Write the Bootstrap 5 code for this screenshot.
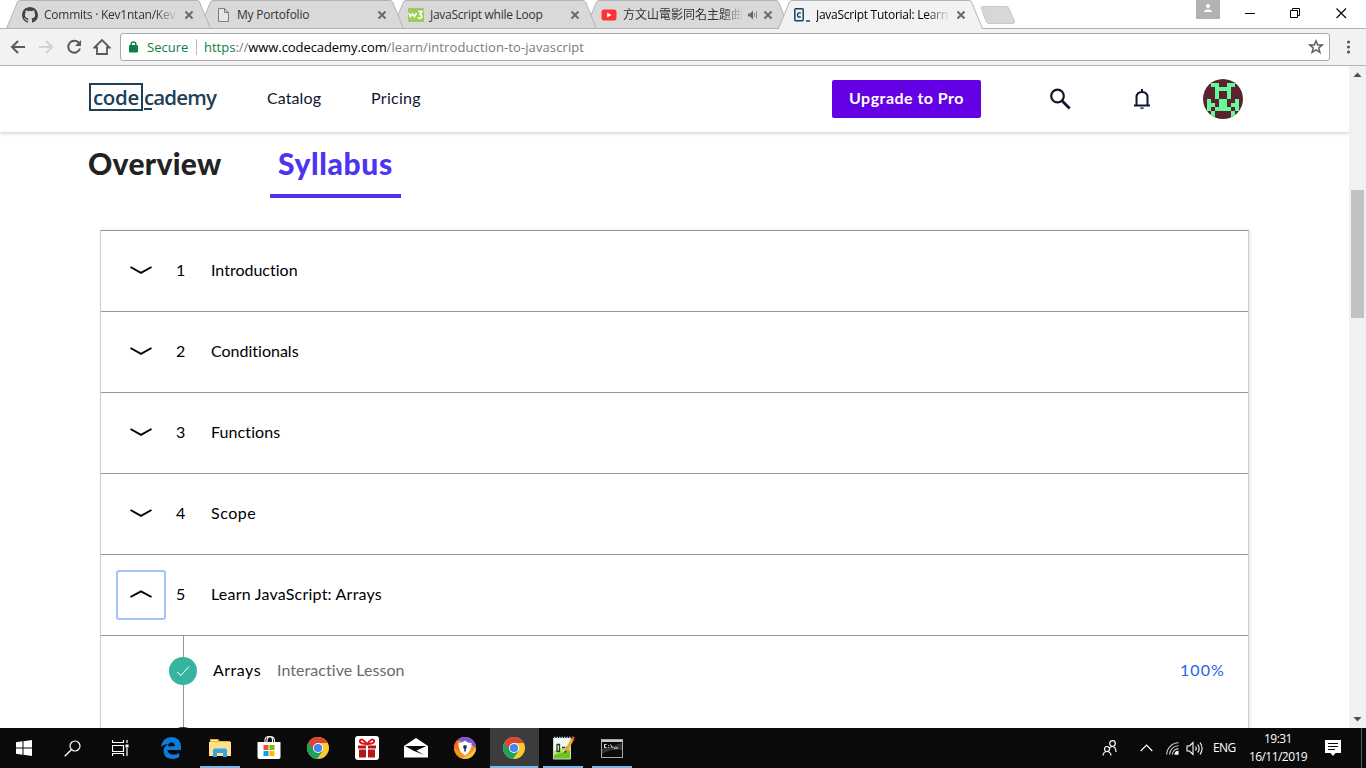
<!DOCTYPE html>
<html lang="en">
<head>
<meta charset="utf-8">
<meta name="viewport" content="width=device-width, initial-scale=1">
<title>JavaScript Tutorial: Learn JavaScript | Codecademy</title>
<link href="https://cdn.jsdelivr.net/npm/bootstrap@5.3.0/dist/css/bootstrap.min.css" rel="stylesheet">
<style>
body{width:1366px;height:768px;overflow:hidden;background:#fff;font-family:"Open Sans","Noto Sans CJK TC",sans-serif;color:#000}
svg{display:block;flex:none}
.t{white-space:nowrap;flex:none}
/* browser chrome */
.tabstrip{height:29px;background:#fff;padding-left:6px;border-bottom:1px solid #b3b3b3}
.btab{width:205px;height:29px;margin-right:-12px;padding-left:16px;font-size:12px;line-height:29px;letter-spacing:-.24px;color:#333;flex:none;isolation:isolate}
.btab>svg.shape{position:absolute;left:0;top:0;z-index:-1}
.btab .ttl{width:134px;margin-left:6px}
.btab .ttl+svg{margin-left:6px}
.fade-end{-webkit-mask-image:linear-gradient(90deg,#000 82%,transparent);mask-image:linear-gradient(90deg,#000 82%,transparent)}
.toolbar{height:37px;background:#f2f2f2;border-bottom:1px solid #b6b6b6;padding-left:10px}
.omni{width:1210px;height:28px;background:#fff;border:1px solid #a9a9a9;border-radius:3px;font-size:13px;line-height:26px}
.grn{color:#0b8043}.gry{color:#7b7b7b}
/* page */
.viewport{height:662px}
.page{width:1349px;overflow:hidden}
.sitebar{height:66px;box-shadow:0 1px 4px rgba(0,0,0,.22);padding-left:89px;font-family:Lato,sans-serif;font-size:16px;color:#10162f;z-index:2}
.sitebar .nl{padding-bottom:2px}
.logo{height:28px;color:#204056;font:600 20.5px/24px "Open Sans",sans-serif;letter-spacing:-.85px}
.logo .boxed{width:54px;height:28px;border:2px solid #204056;padding-left:2px;letter-spacing:-.35px}
.btn-pro{width:149px;height:38px;border-radius:2px;background:#6400e4;color:#fff;font:700 16px/34px Lato,sans-serif;letter-spacing:.48px;padding:0 0 3px;border:0}
.tabs{height:66px;padding-left:88px;font:900 30px/40px Lato,sans-serif;letter-spacing:.3px;color:#222}
.tabs .on{color:#4b35ef;border-bottom:4px solid #4b35ef;width:131px;height:66px;padding-left:8px;letter-spacing:.65px}
.tabs .pad{padding-top:11px}
.syllabus{margin:32px 0 0 100px;width:1149px;height:498px;border:1px solid #ccc;border-top-color:#979797;border-bottom:0;box-shadow:1px 0 3px rgba(0,0,0,.12);font-family:Lato,sans-serif;font-size:16px;font-variant-ligatures:none}
.unit{height:81px;border-bottom:1px solid #979797;padding-left:15px}
.unit>span{padding-bottom:2px}
.tog{width:50px;height:50px;border:2px solid transparent;border-radius:3px}
.tog.up{border-color:#a5c3fb}
.tog svg{margin-bottom:2px}
.num{width:35px;margin-left:10px}
.lesson{height:92px;padding-left:68px}
.lesson>span{margin-top:22px}
.rail{left:82px;top:0;width:1px;height:92px;background:#979797}
.scroll{width:17px;background:#f1f1f1}
.thumb{height:128px;width:13px;background:#c1c1c1;margin:107px 0 0 2px}
/* taskbar */
.taskbar{height:40px;background:#0a0a0a;color:#fff;font-size:12px}
.tk{width:49px;height:40px;flex:none;display:flex;align-items:center;justify-content:center;position:relative;padding-right:2px}
.tk.sys{width:48px;padding-right:0}
.run::after{content:"";position:absolute;left:4px;right:5px;bottom:0;height:2px;background:#76b9ed}
.act{background:#3c3c3c}
.act::after{left:0;right:1px}
.clock{width:70px;line-height:18px;letter-spacing:-.55px}
</style>
</head>
<body>
<svg width="0" height="0" class="position-absolute">
  <defs>
    <path id="x" d="M1.500 1.500L8.500 8.500M8.500 1.500L1.500 8.500" fill="none" stroke="#6b6b6b" stroke-width="2"/>
    <path id="tabshape" d="M0.500 28.500L11.500 2Q12 .5 14 .5H191Q193 .5 193.500 2L204.500 28.500Z"/>
    <path id="down" d="M.5 1L11 6.800L21.500 1" fill="none" stroke="#000" stroke-width="1.900"/>
    <g id="chromeicon">
      <circle cx="11" cy="11" r="11" fill="#fbc934"/>
      <path d="M1.500 5.500A11 11 0 0 0 10 22L15.500 14L11 11Z" fill="#1fa15d"/>
      <path d="M1.500 5.500L6.500 13L11 6H20.800A11 11 0 0 0 1.500 5.500Z" fill="#db4437"/>
      <circle cx="11" cy="11" r="5" fill="#fff"/><circle cx="11" cy="11" r="4.100" fill="#4285f4"/>
    </g>
  </defs>
</svg>

<div class="tabstrip d-flex position-relative">
  <div class="btab d-flex align-items-center position-relative" style="z-index:4">
    <svg class="shape" width="205" height="29"><use href="#tabshape" fill="#d9d9d9" stroke="#b3b3b3"/></svg>
    <svg width="16" height="16" viewBox="0 0 16 16"><path fill="#444" d="M8 0C3.580 0 0 3.580 0 8c0 3.540 2.290 6.530 5.470 7.590.4.070.55-.17.55-.38v-1.490c-2.010.37-2.530-.49-2.690-.94-.09-.23-.48-.94-.82-1.130-.28-.15-.68-.52-.01-.53.63-.01 1.080.58 1.230.82.72 1.210 1.870.87 2.330.66.07-.52.28-.87.51-1.070-1.780-.2-3.640-.89-3.640-3.950 0-.87.31-1.590.82-2.150-.08-.2-.36-1.020.08-2.120 0 0 .67-.21 2.200.82a7.420 7.420 0 0 1 4 0c1.530-1.040 2.200-.82 2.200-.82.44 1.100.16 1.920.08 2.120.51.56.82 1.270.82 2.150 0 3.070-1.870 3.750-3.650 3.950.29.25.54.73.54 1.480v2.200c0 .21.15.46.55.38A8 8 0 0 0 16 8c0-4.420-3.580-8-8-8z"/></svg>
    <div class="t ttl fade-end">Commits · Kev1ntan/Kev</div>
    <svg width="10" height="10"><use href="#x"/></svg>
  </div>
  <div class="btab d-flex align-items-center position-relative" style="z-index:3">
    <svg class="shape" width="205" height="29"><use href="#tabshape" fill="#d9d9d9" stroke="#b3b3b3"/></svg>
    <svg width="16" height="16"><path d="M3.500 1.500H9.500L13.500 5.500V14.500H3.500ZM9.500 1.500V5.500H13.500" fill="#e6e6e6" stroke="#7d7d7d"/></svg>
    <div class="t ttl">My Portofolio</div>
    <svg width="10" height="10"><use href="#x"/></svg>
  </div>
  <div class="btab d-flex align-items-center position-relative" style="z-index:2">
    <svg class="shape" width="205" height="29"><use href="#tabshape" fill="#d9d9d9" stroke="#b3b3b3"/></svg>
    <svg width="16" height="16"><rect y="1" width="16" height="14" rx="1" fill="#9bcc5c"/><path d="M1 6l1.500 3.500L4.500 7l2 2.500L8.500 6M10 4.500H14L12 7.500Q14.500 8 13.500 10.500Q12 12 10 10.500" fill="none" stroke="#fff" stroke-width="1.600"/></svg>
    <div class="t ttl" style="letter-spacing:-.27px">JavaScript while Loop</div>
    <svg width="10" height="10"><use href="#x"/></svg>
  </div>
  <div class="btab d-flex align-items-center position-relative" style="z-index:1">
    <svg class="shape" width="205" height="29"><use href="#tabshape" fill="#d9d9d9" stroke="#b3b3b3"/></svg>
    <svg width="16" height="16"><rect x=".5" y="2.500" width="15" height="11" rx="2.500" fill="#f33"/><path d="M6.200 5.500V10.500L10.500 8Z" fill="#fff"/></svg>
    <div class="t ttl fade-end" style="width:120px;letter-spacing:0">方文山電影同名主題曲</div>
    <svg width="12" height="12" style="margin-left:4px"><path d="M1 4.500H3L6 1.500V10.500L3 7.500H1Z" fill="#666"/><path d="M7.500 4V8M9.500 2.500V9.500" stroke="#888"/></svg>
    <svg width="10" height="10" style="margin-left:4px"><use href="#x"/></svg>
  </div>
  <div class="btab d-flex align-items-center position-relative text-black" style="z-index:5;letter-spacing:-.27px">
    <svg class="shape" width="205" height="30"><use href="#tabshape" fill="#f2f2f2" stroke="#b3b3b3"/><path d="M1 28.500H204" stroke="#f2f2f2"/></svg>
    <svg width="16" height="16"><rect x=".8" y="1.800" width="8.400" height="12" rx="1" fill="#e9eff3" stroke="#204056" stroke-width="1.500"/><path d="M6.800 6.200Q3.500 5 3.500 8Q3.500 10.800 6.800 9.800" fill="none" stroke="#204056" stroke-width="1.400"/><path d="M12 14H16" stroke="#204056" stroke-width="1.500"/></svg>
    <div class="t ttl fade-end">JavaScript Tutorial: Learn</div>
    <svg width="10" height="10"><use href="#x"/></svg>
  </div>
  <svg width="36" height="18" style="margin:6px 0 0 9px"><path d="M1 1.500Q1 .5 3 .5H26Q28 .5 29 2.500L34.500 15Q35 17.500 33 17.500H9Q7 17.500 6 15.500Z" fill="#d7d7d7" stroke="#c9c9c9"/></svg>
  <svg width="24" height="19" style="margin-left:180px"><rect width="24" height="19" fill="#b2b2b2"/><circle cx="12" cy="6" r="2" fill="#fff"/><path d="M8 12V11Q12 7.500 16 11V12Z" fill="#fff"/></svg>
  <svg width="11" height="28" style="margin-left:25px"><path d="M0 13.500H10" stroke="#000"/></svg>
  <svg width="12" height="28" style="margin-left:34px"><path d="M.5 10.500H7.500V17.500H.5ZM2.500 10V8.500H9.500V15.500H8" fill="none" stroke="#000"/></svg>
  <svg width="12" height="28" style="margin-left:34px"><path d="M.5 8.500L10 18M10 8.500L.5 18" stroke="#000" stroke-width="1.100"/></svg>
</div>

<div class="toolbar d-flex align-items-center">
  <svg width="16" height="16"><path d="M15 8H2M8 2L2 8L8 14" fill="none" stroke="#5a5a5a" stroke-width="2"/></svg>
  <svg width="16" height="16" style="margin-left:12px"><path d="M1 8H14M8 2L14 8L8 14" fill="none" stroke="#d2d2d2" stroke-width="2"/></svg>
  <svg width="16" height="16" style="margin-left:12px"><path d="M13.200 4.300A6 6 0 1 0 14 9.500" fill="none" stroke="#5a5a5a" stroke-width="2"/><path d="M15 1V7H9Z" fill="#5a5a5a"/></svg>
  <svg width="18" height="18" style="margin-left:11px"><path d="M1.500 9.500L9 2L16.500 9.500H14V16H4V9.500Z" fill="none" stroke="#5a5a5a" stroke-width="1.800"/></svg>
  <div class="omni d-flex align-items-center" style="margin-left:9px">
    <svg width="9" height="12" style="margin-left:8px"><rect y="4" width="9" height="7.500" rx="1" fill="#0b8043"/><path d="M2.200 5V3Q2.200 1 4.500 1Q6.800 1 6.800 3V5" fill="none" stroke="#0b8043" stroke-width="1.400"/></svg>
    <span class="t grn" style="margin-left:9px;width:40px">Secure</span>
    <span style="width:1px;height:16px;margin:0 7px 0 9px;background:#bbb"></span>
    <span class="t"><span class="grn">https</span><span class="gry">://</span><span style="letter-spacing:-.08px">www.codecademy.com</span><span class="gry" style="letter-spacing:.1px">/learn/introduction-to-javascript</span></span>
    <svg class="ms-auto" width="16" height="16" style="margin-right:5px"><path d="M8 1.800L9.700 6H14.200L10.700 8.900L12 13.500L8 10.900L4 13.500L5.300 8.900L1.800 6H6.300Z" fill="none" stroke="#5a5a5a" stroke-width="1.400"/></svg>
  </div>
  <svg width="5" height="16" style="margin-left:16px"><circle cx="2.500" cy="3" r="1.600" fill="#5a5a5a"/><circle cx="2.500" cy="8" r="1.600" fill="#5a5a5a"/><circle cx="2.500" cy="13" r="1.600" fill="#5a5a5a"/></svg>
</div>

<div class="viewport d-flex">
  <main class="page">
    <header class="sitebar d-flex align-items-center position-relative">
      <div class="logo d-flex" style="width:128px;margin-top:-5px">
        <div class="boxed t">code</div>
        <svg width="8" height="2" class="position-absolute" style="left:144px;top:42px"><rect width="8" height="2" fill="#204056"/></svg>
        <span class="t" style="padding:2px 0 0 1px">cademy</span>
      </div>
      <span class="t nl" style="margin-left:50px;width:104px;letter-spacing:.1px">Catalog</span>
      <span class="t nl" style="width:461px;letter-spacing:.3px">Pricing</span>
      <button class="btn btn-pro t">Upgrade to Pro</button>
      <svg width="22" height="22" style="margin-left:68px"><circle cx="8.500" cy="8" r="6.300" fill="none" stroke="#10162f" stroke-width="2.200"/><path d="M13 12.800L20.700 20.500" stroke="#10162f" stroke-width="2.800"/></svg>
      <svg width="18" height="22" style="margin-left:62px"><path d="M1 17.500H17M3.500 17V9.500Q3.500 4 9 4Q14.500 4 14.500 9.500V17" fill="none" stroke="#10162f" stroke-width="2"/><path d="M8 1H10V4H8ZM7 19.500H11Q10.500 21 9 21Q7.500 21 7 19.500Z" fill="#10162f"/></svg>
      <svg width="40" height="40" viewBox="0 0 10 10" style="margin-left:52px" class="rounded-circle"><rect width="10" height="10" fill="#5c2230"/><path fill="#64fa9b" shape-rendering="crispEdges" d="M2 1h2v1h2v-1h2v1h-1v3h-1v-2h-2v2h-1v-3h-1zM4 5h2v2h1v1h-4v-1h1zM1 5h1v1h1v1h-1v1h-1zM9 5h-1v1h-1v1h1v1h1zM2 8h1v2h-1zM7 8h1v2h-1z"/></svg>
    </header>
    <nav class="tabs d-flex">
      <div class="pad t" style="width:182px">Overview</div>
      <div class="on pad t">Syllabus</div>
    </nav>
    <section class="syllabus">
      <div class="unit d-flex align-items-center"><div class="tog d-flex align-items-center justify-content-center"><svg width="22" height="8"><use href="#down"/></svg></div><span class="num t">1</span><span class="t">Introduction</span></div>
      <div class="unit d-flex align-items-center"><div class="tog d-flex align-items-center justify-content-center"><svg width="22" height="8"><use href="#down"/></svg></div><span class="num t">2</span><span class="t">Conditionals</span></div>
      <div class="unit d-flex align-items-center"><div class="tog d-flex align-items-center justify-content-center"><svg width="22" height="8"><use href="#down"/></svg></div><span class="num t">3</span><span class="t" style="letter-spacing:.1px">Functions</span></div>
      <div class="unit d-flex align-items-center"><div class="tog d-flex align-items-center justify-content-center"><svg width="22" height="8"><use href="#down"/></svg></div><span class="num t">4</span><span class="t" style="letter-spacing:.5px">Scope</span></div>
      <div class="unit d-flex align-items-center"><div class="tog up d-flex align-items-center justify-content-center"><svg width="22" height="8"><path d="M.5 7L11 1.300L21.500 7" fill="none" stroke="#000" stroke-width="1.900"/></svg></div><span class="num t">5</span><span class="t" style="letter-spacing:.22px">Learn JavaScript: Arrays</span></div>
      <div class="lesson d-flex position-relative">
        <div class="rail position-absolute"></div>
        <div class="position-relative" style="width:28px">
          <svg width="28" height="28" style="margin-top:21px"><circle cx="14" cy="14" r="14" fill="#35b5a0"/><path d="M8 15L12 18.500L20 9.500" fill="none" stroke="#fff"/></svg>
          <svg width="28" height="28" style="margin-top:42px"><circle cx="14" cy="14" r="14" fill="#1c2b35"/></svg>
        </div>
        <span class="t" style="margin-left:16px;width:64px;letter-spacing:.5px">Arrays</span>
        <span class="t" style="color:#6a6a6a;letter-spacing:.05px">Interactive Lesson</span>
        <span class="t ms-auto" style="padding-right:23px;color:#2563eb;letter-spacing:1.1px">100%</span>
      </div>
    </section>
  </main>
  <div class="scroll d-flex flex-column">
    <svg width="17" height="17"><path d="M4.500 11L8.500 6.500L12.500 11Z" fill="#505050"/></svg>
    <div class="thumb"></div>
    <svg class="mt-auto" width="17" height="17"><path d="M4.500 6L8.500 10.500L12.500 6Z" fill="#505050"/></svg>
  </div>
</div>

<footer class="taskbar d-flex align-items-center">
  <div class="tk sys"><svg width="16" height="16"><path d="M0 2.300L6.500 1.300V7.500H0ZM7.500 1.200L16 0V7.500H7.500ZM0 8.500H6.500V14.700L0 13.700ZM7.500 8.500H16V16L7.500 14.800Z" fill="#fff"/></svg></div>
  <div class="tk sys"><svg width="17" height="17"><circle cx="11" cy="6" r="5" fill="none" stroke="#fff" stroke-width="1.200"/><path d="M7.300 9.700L.7 16.300" stroke="#fff" stroke-width="1.400"/></svg></div>
  <div class="tk sys" style="margin-right:3px"><svg width="17" height="16"><path d="M.5 0V2.500H11.500V0M.5 16V13.500H11.500V16M.5 5.500H11.500V11.500H.5ZM15 0V3M15 8V16" fill="none" stroke="#fff" stroke-width="1.200"/><rect x="13.500" y="4.500" width="3" height="3" fill="#fff"/></svg></div>
  <div class="tk"><svg width="20" height="22"><path d="M0 10Q1.500 0 10.500 0Q20 .5 20 10V13H6.500Q7 17.500 12 17.700Q15.500 17.700 18.200 16V20.300Q15 22 11 22Q2.500 21.500 2.500 14Q2.500 9.500 7 7Q3 7 0 10ZM6.800 9.200H13.800Q13.800 5.500 10.500 5.500Q7.500 5.800 6.800 9.200Z" fill="#0b7bdc"/></svg></div>
  <div class="tk run"><svg width="22" height="20"><path d="M1 1H9L11 3H21V17H1Z" fill="#e7b32c"/><path d="M0 4H22V18H0Z" fill="#fde18e"/><path d="M2 2H8V3H2Z" fill="#fff3c4"/><path d="M4 19V12Q4 10.500 6 10.500H16Q18 10.500 18 12V19H14V15H8V19Z" fill="#35a3dd"/></svg></div>
  <div class="tk"><svg width="24" height="24" style="margin-top:-2px"><path d="M8 8V5Q8 1.500 12 1.500Q15.500 1.500 15.500 5V8M10 8V4.500Q11 1 14 1.500Q17.500 2 17.500 6V8" fill="none" stroke="#fff" stroke-width="1.100"/><path d="M.5 7H23.500V22Q23.500 24 21.500 24H2.500Q.5 24 .5 22Z" fill="#fff"/><path d="M6.500 10H11.500V15H6.500Z" fill="#f25022"/><path d="M12.500 10H17.500V15H12.500Z" fill="#7fba00"/><path d="M6.500 16H11.500V21H6.500Z" fill="#00a4ef"/><path d="M12.500 16H17.500V21H12.500Z" fill="#ffb900"/></svg></div>
  <div class="tk"><svg width="22" height="22"><use href="#chromeicon"/></svg></div>
  <div class="tk"><svg width="24" height="24"><rect width="24" height="24" rx="3" fill="#fff"/><path d="M3 9.500H21V12.500H3ZM4 13.500H11V21.500H4ZM13 13.500H20V21.500H13Z" fill="#b3161b"/><path d="M11 9.500H13V21.500H11Z" fill="#fff"/><path d="M12 8Q4 8 5 4.500Q6.500 1.500 12 8Q17.500 1.500 19 4.500Q20 8 12 8Z" fill="none" stroke="#d8141c" stroke-width="1.900"/></svg></div>
  <div class="tk"><svg width="24" height="20"><path d="M0 8L12 0L24 8V19.500H0Z" fill="#fff"/><path d="M1 8H22.500L12.500 12.500L20 17L9.500 12.700Z" fill="#0a0a0a"/></svg></div>
  <div class="tk"><svg width="22" height="22"><circle cx="11" cy="11" r="11" fill="#f79321"/><path d="M3 3.500A11 11 0 0 1 22 11L15 6Z" fill="#7b57d9"/><path d="M22 11A11 11 0 0 1 8 21.500L17 16Z" fill="#fbc23a"/><path d="M0 11A11 11 0 0 1 3.500 3L6 14Z" fill="#f86a25"/><path d="M11 3.500Q13.500 6 17.500 6Q18 14.500 11 18.500Q4 14.500 4.500 6Q8.500 6 11 3.500Z" fill="#fff"/><circle cx="11" cy="10" r="1.900" fill="#23365c"/><path d="M10.200 10H11.800V14.500H10.200Z" fill="#23365c"/></svg></div>
  <div class="tk run act"><svg width="22" height="22"><use href="#chromeicon"/></svg></div>
  <div class="tk run"><svg width="24" height="24"><path d="M2 2H20V23H2Z" fill="#f4f8ee"/><path d="M2 15L20 9V23H2Z" fill="#b9e67a"/><path d="M2 19L20 14V23H2Z" fill="#6cc322"/><path d="M2.500 3V23H19.500V3" fill="none" stroke="#cfd8c8"/><path d="M3 1.500H20" stroke="#bbb" stroke-width="1.500" stroke-dasharray="1.500 1"/><path d="M6 8V16M6 8.500H8.500V15.500H6M11 11.500H14M15 11.500H17" fill="none" stroke="#2b3b22" stroke-width="1.300"/><path d="M13 18L14 14L20.500 2L23 3.500L16.500 15.500Z" fill="#f0a52b"/><path d="M20.500 2L21.500 0L24 1.500L23 3.500Z" fill="#d84b3a"/><path d="M13 18L14 14.500L16 15.500Z" fill="#4a3a28"/></svg></div>
  <div class="tk run"><svg width="22" height="19"><rect x=".5" y=".5" width="21" height="18" fill="#0b0b0b" stroke="#aaa"/><path d="M1 2H21" stroke="#c9c9c9" stroke-width="2"/><path d="M1 10L21 4V11Q10 10 1 15Z" fill="#333"/><path d="M5.500 5.500H3.500V8.500H5.500M7.500 6V6.800M7.500 8V8.800M9.500 5.500L11.500 9M12.500 9H17" fill="none" stroke="#eee"/></svg></div>
  <svg width="16" height="16" style="margin-left:465px"><circle cx="10.500" cy="3.500" r="2.800" fill="none" stroke="#fff" stroke-width="1.200"/><path d="M7.500 8Q10.500 5 13 8Q14 9.500 14 12" fill="none" stroke="#fff" stroke-width="1.200"/><circle cx="5" cy="9" r="2.500" fill="none" stroke="#fff" stroke-width="1.200"/><path d="M1 15.500Q1.500 11.500 5 11.500Q8.500 11.500 9 15.500" fill="none" stroke="#fff" stroke-width="1.200"/></svg>
  <svg width="13" height="8" style="margin-left:22px"><path d="M.7 7L6.500 1.200L12.300 7" fill="none" stroke="#fff" stroke-width="1.200"/></svg>
  <svg width="13" height="13" style="margin:1px 0 0 13px"><path d="M.7 12.500A12 12 0 0 1 12.500 .8M3.500 12.500A9 9 0 0 1 12.500 3.800M6.300 12.500A6.200 6.200 0 0 1 12.500 6.600" fill="none" stroke="#ccc" stroke-width="1.100"/><path d="M8.500 12.800A4 4 0 0 1 12.500 8.800V12.800Z" fill="#fff"/></svg>
  <svg width="18" height="15" style="margin-left:7px"><path d="M1 5H3.500L7 1.500V13.500L3.500 10H1Z" fill="none" stroke="#fff" stroke-width="1.100"/><path d="M9.500 5.500Q11 7.500 9.500 9.500M11.800 3.500Q14.500 7.500 11.800 11.500M14 1.500Q18.200 7.500 14 13.500" fill="none" stroke="#fff" stroke-width="1.100"/></svg>
  <span class="t" style="margin-left:9px;width:30px;letter-spacing:-.6px">ENG</span>
  <div class="clock t text-center">19:31<br>16/11/2019</div>
  <svg width="16" height="16" style="margin-left:12px"><path d="M0 0H16V13H10.500L8 16L5.500 13H0Z" fill="#fff"/><path d="M3 3.500H13M3 6.500H13M3 9.500H10" stroke="#0a0a0a"/></svg>
  <span class="ms-auto" style="width:1px;height:40px;margin-right:4px;background:#5d5d5d"></span>
</footer>
<script src="https://cdn.jsdelivr.net/npm/bootstrap@5.3.0/dist/js/bootstrap.bundle.min.js"></script>
</body>
</html>
